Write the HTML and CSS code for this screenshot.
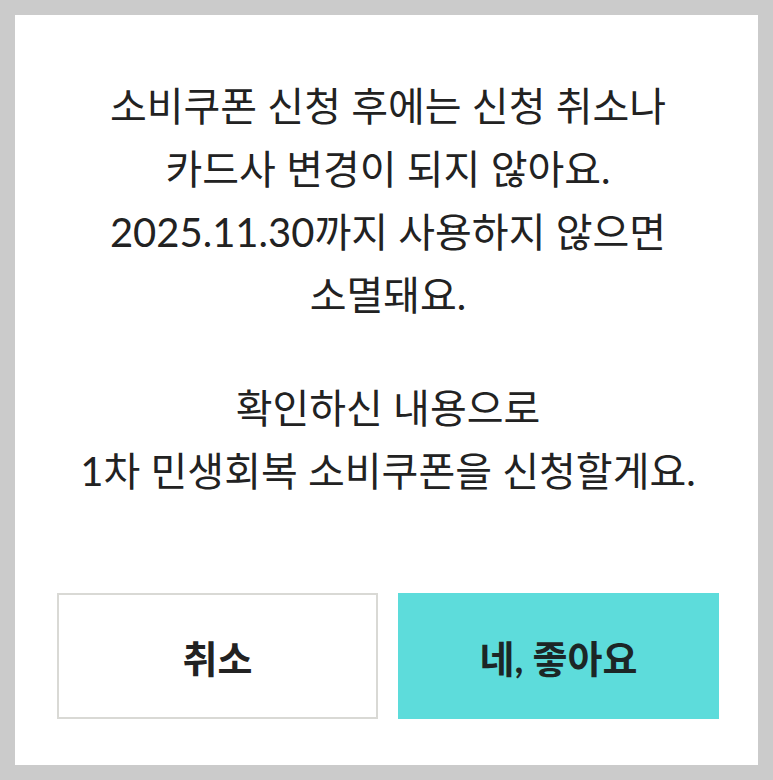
FILE: index.html
```html
<!DOCTYPE html>
<html lang="ko">
<head>
<meta charset="utf-8">
<title>소비쿠폰 신청 확인</title>
<link rel="stylesheet" href="styles.css">
</head>
<body>
<div class="dialog">
  <div class="message">
    <p class="para">소비쿠폰 신청 후에는 신청 취소나<br>카드사 변경이 되지 않아요.<br>2025.11.30까지 사용하지 않으면<br>소멸돼요.</p>
    <p class="para second">확인하신 내용으로<br>1차 민생회복 소비쿠폰을 신청할게요.</p>
  </div>
  <div class="actions">
    <button class="btn cancel">취소</button>
    <button class="btn confirm">네, 좋아요</button>
  </div>
</div>
</body>
</html>
```
FILE: styles.css
```css
html, body {
  margin: 0;
  padding: 0;
}
body {
  background: #cbcbcb;
  padding: 15px;
  font-family: "Lato", "Noto Sans CJK KR", sans-serif;
}
.dialog {
  width: 743px;
  height: 750px;
  background: #ffffff;
  box-sizing: border-box;
  padding: 60px 39px 46px 42px;
  display: flex;
  flex-direction: column;
}
.message {
  text-align: center;
  color: #222222;
  font-family: "Lato", "Noto Sans CJK KR", sans-serif;
  font-size: 40px;
  line-height: 63px;
  font-weight: 400;
}
.para {
  margin: 0;
}
.para.second {
  margin-top: 50px;
}
.actions {
  margin-top: auto;
  display: flex;
  gap: 20px;
}
.btn {
  flex: 1 1 0;
  min-width: 0;
  height: 126px;
  box-sizing: border-box;
  font-family: "Lato", "Noto Sans CJK KR", sans-serif;
  font-size: 38px;
  font-weight: 700;
  color: #222222;
  cursor: pointer;
  padding: 0;
  margin: 0;
}
.cancel {
  background: #ffffff;
  border: 2px solid #d9d9d5;
}
.confirm {
  background: #5ddcdb;
  border: 2px solid #5ddcdb;
  color: #1c2626;
}
```
